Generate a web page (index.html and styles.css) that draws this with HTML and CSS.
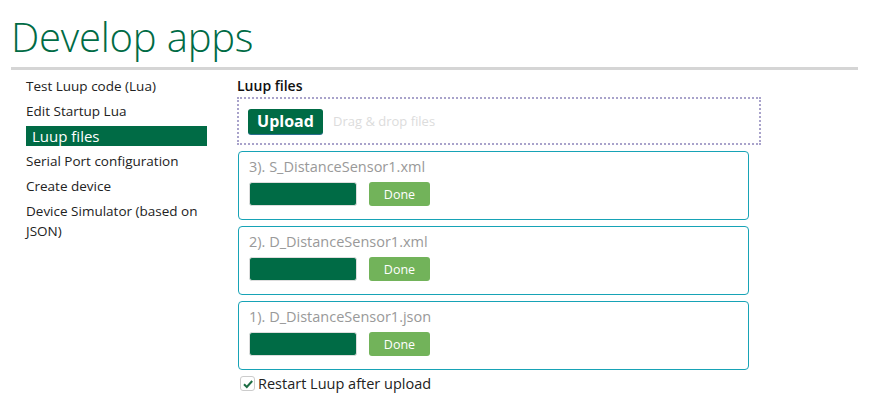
FILE: index.html
```html
<!DOCTYPE html>
<html>
<head>
<meta charset="utf-8">
<link rel="stylesheet" href="styles.css">
</head>
<body>
<h1 class="title">Develop apps</h1>
<div class="rule"></div>
<div class="layout">
  <ul class="nav">
    <li>Test Luup code (Lua)</li>
    <li>Edit Startup Lua</li>
    <li class="active">Luup files</li>
    <li>Serial Port configuration</li>
    <li>Create device</li>
    <li>Device Simulator (based on JSON)</li>
  </ul>
  <div class="main">
    <div class="heading">Luup files</div>
    <div class="drop">
      <button class="upload">Upload</button>
      <span class="hint">Drag &amp; drop files</span>
    </div>
    <div class="card">
      <div class="fname">3). S_DistanceSensor1.xml</div>
      <div class="row"><div class="bar"></div><button class="done">Done</button></div>
    </div>
    <div class="card">
      <div class="fname">2). D_DistanceSensor1.xml</div>
      <div class="row"><div class="bar"></div><button class="done">Done</button></div>
    </div>
    <div class="card">
      <div class="fname">1). D_DistanceSensor1.json</div>
      <div class="row"><div class="bar"></div><button class="done">Done</button></div>
    </div>
    <label class="check">
      <span class="box"><svg width="12" height="12" viewBox="0 0 12 12"><path d="M2 6.2 L4.8 9 L10.2 3" fill="none" stroke="#1e6e45" stroke-width="2"/></svg></span>
      Restart Luup after upload
    </label>
  </div>
</div>
</body>
</html>
```
FILE: styles.css
```css
* { box-sizing: border-box; }
body {
  margin: 0;
  font-family: "Open Sans", "Noto Sans", sans-serif;
  background: #fff;
  color: #222;
}
.title {
  margin: 0;
  padding: 12px 0 0 11px;
  height: 67px;
  font-weight: 300;
  font-size: 40px;
  line-height: 50px;
  color: #006b45;
  letter-spacing: -0.2px;
}
.rule {
  margin-left: 11px;
  width: 847px;
  height: 3px;
  background: #d5d5d5;
}
.layout {
  display: flex;
  gap: 30px;
  padding: 6px 0 0 26px;
}
.nav {
  list-style: none;
  margin: 0;
  padding: 0;
  width: 181px;
  font-size: 13.5px;
  line-height: 20px;
  color: #222;
}
.nav li {
  margin-bottom: 5px;
}
.nav li.active {
  background: #006b45;
  color: #fff;
  font-size: 15px;
  padding-left: 6px;
}
.main {
  width: 524px;
}
.heading {
  font-size: 14px;
  font-weight: 600;
  line-height: 20px;
  color: #111;
  margin-bottom: 1px;
}
.drop {
  border: 2px dotted #a9a3cb;
  height: 48px;
  padding: 9px 9px;
  display: flex;
  align-items: center;
  gap: 10px;
}
.upload {
  font-family: inherit;
  background: #006b45;
  color: #fff;
  border: none;
  border-radius: 3px;
  box-shadow: 0 1px 0 #2a6f8e;
  font-size: 16px;
  font-weight: 700;
  width: 75px;
  height: 25px;
  padding: 0;
  line-height: 25px;
}
.hint {
  color: #dcdcdc;
  font-size: 13px;
}
.card {
  margin-top: 6px;
  margin-left: 1px;
  width: 511px;
  height: 69px;
  border: 1.5px solid #17a3b6;
  border-radius: 4px;
  padding: 5px 10px 0 10px;
}
.card + .card { margin-top: 6px; }
.fname {
  color: #999;
  font-size: 14.5px;
  line-height: 20px;
}
.row {
  display: flex;
  gap: 12px;
  margin-top: 5px;
}
.bar {
  width: 108px;
  height: 24px;
  background: #006b45;
  border: 1px solid #ddd;
  border-radius: 3px;
}
.done {
  font-family: inherit;
  width: 61px;
  height: 24px;
  background: #72b35a;
  color: #fff;
  border: none;
  border-radius: 3px;
  font-size: 12.5px;
  padding: 0;
}
.check {
  display: flex;
  align-items: center;
  gap: 3px;
  margin-top: 4px;
  margin-left: 3px;
  font-size: 14.5px;
  color: #222;
}
.box {
  width: 15px;
  height: 15px;
  border: 1px solid #ccc;
  border-radius: 3px;
  display: flex;
  align-items: center;
  justify-content: center;
}
.box svg { display: block; }
```
